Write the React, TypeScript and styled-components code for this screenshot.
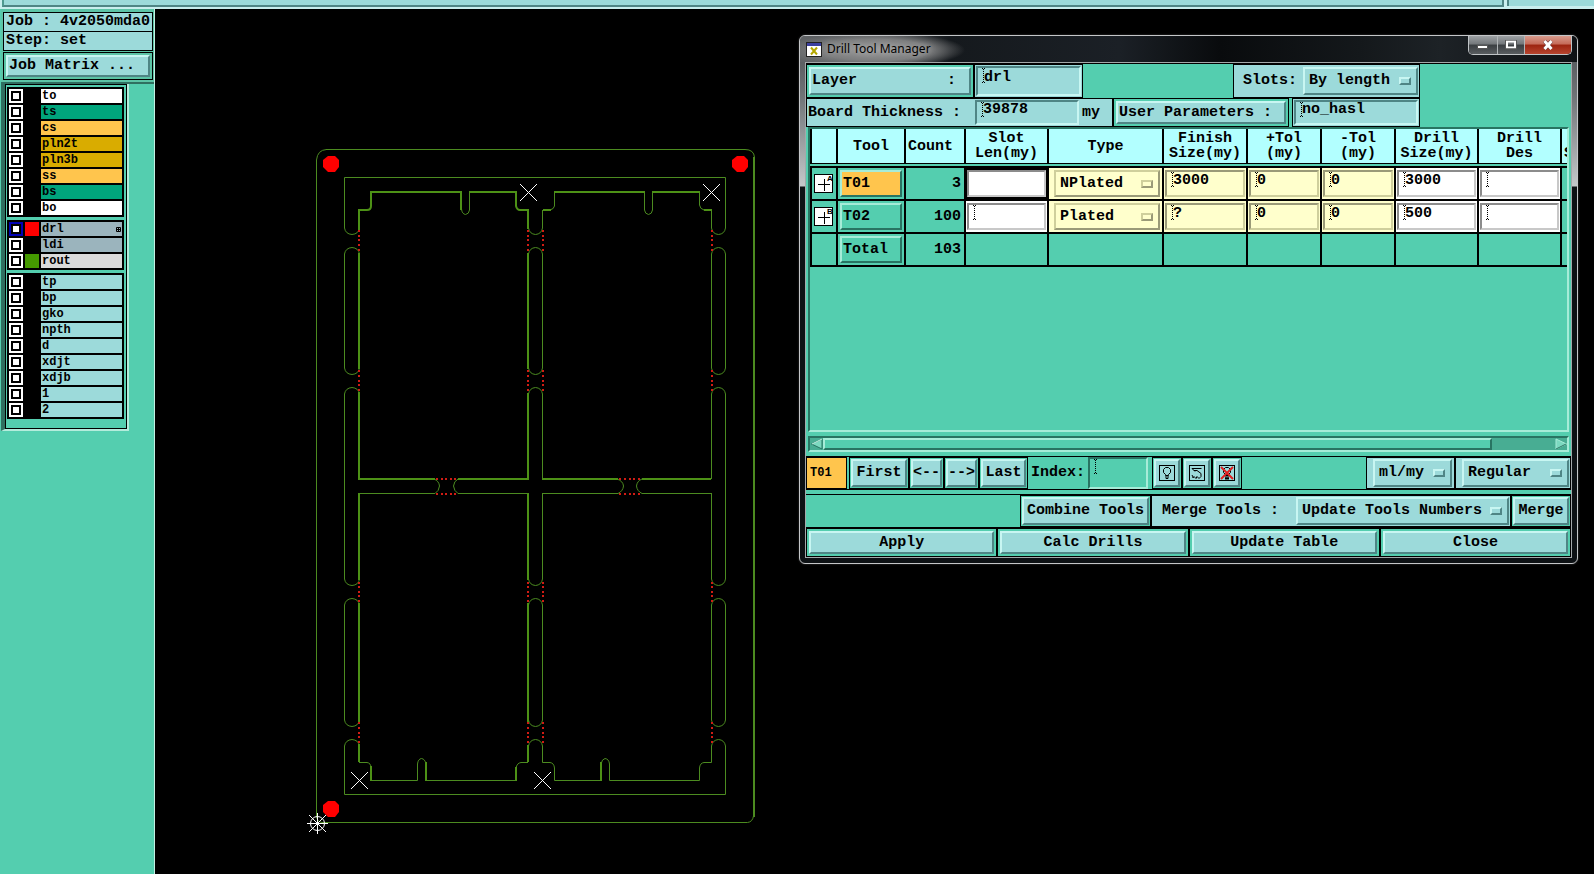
import React from "react";
import styled, { createGlobalStyle, css } from "styled-components";

const GREEN = "#54ceaf";
const CYAN = "#9cdada";
const MONO = '"Liberation Mono", "Courier New", monospace';

const GlobalStyle = createGlobalStyle`
  *, *::before, *::after { box-sizing: border-box; }
  body { margin: 0; background: #000; font: bold 15px/16px ${MONO}; color: #000; }
  button, input, select { margin: 0; font: inherit; color: inherit; border-radius: 0; outline: none; }
`;

type Tone = "cyan" | "green" | "orange" | "cream" | "white";

const tones: Record<Tone, { bg: string; light: string; dark: string }> = {
  cyan: { bg: CYAN, light: "#c8f6f2", dark: "#4f8585" },
  green: { bg: GREEN, light: "#a6ecd8", dark: "#287462" },
  orange: { bg: "#ffc54d", light: "#a6ecd8", dark: "#287462" },
  cream: { bg: "#ffffcc", light: "#cfcf9c", dark: "#9a9a78" },
  white: { bg: "#ffffff", light: "#c8c8c8", dark: "#8c8c8c" },
};

const raised = css<{ $tone?: Tone }>`
  border: 2px solid;
  border-color: ${({ $tone = "cyan" }) => {
    const t = tones[$tone];
    return `${t.light} ${t.dark} ${t.dark} ${t.light}`;
  }};
  background-color: ${({ $tone = "cyan" }) => tones[$tone].bg};
`;

/* ---------- page ---------- */

const Page = styled.div`
  display: flex;
  flex-direction: column;
  min-height: 100vh;
  background: #000;
`;

const TopBar = styled.header`
  display: flex;
  gap: 3px;
  height: 9px;
  padding-left: 2px;
  background: #c9eeee;
`;

const TopSegment = styled.div<{ $width?: number }>`
  flex: ${({ $width }) => ($width ? `0 0 ${$width}px` : "1")};
  height: ${({ $width }) => ($width ? 7 : 6)}px;
  background: ${CYAN};
  border-left: 2px solid ${({ $width }) => ($width ? "#4f9a90" : "#4f8585")};
  ${({ $width }) => $width && "border-right: 2px solid #4f8585; border-bottom: 2px solid #4f8585;"}
`;

const Workspace = styled.div`
  flex: 1;
  display: flex;
`;

/* ---------- sidebar ---------- */

const Sidebar = styled.aside`
  flex: 0 0 155px;
  padding-left: 1px;
  background: ${GREEN};
  border-right: 1px solid #c2f0e2;
`;

const JobPanel = styled.section`
  display: flex;
  flex-direction: column;
  gap: 1px;
  padding: 3px 1px 2px 2px;
  background: #5cc4a6;
  border-bottom: 2px solid #2f6f60;
`;

const JobLines = styled.div`
  display: flex;
  flex-direction: column;
  gap: 1px;
  padding: 1px;
  background: #000;
`;

const JobLine = styled.div`
  height: 18px;
  padding: 0 2px;
  line-height: 18px;
  background: ${CYAN};
  white-space: pre;
`;

const JobButtonBox = styled.div`
  padding: 2px;
  border: 1px solid #000;
`;

const LayerFrame = styled.section`
  width: 128px;
  border-left: 4px solid #2f6f60;
  border-right: 2px solid #b4ecdc;
  border-bottom: 2px solid #b4ecdc;
`;

const LayerPanel = styled.div`
  display: flex;
  flex-direction: column;
  gap: 3px;
  padding: 2px 2px 9px 1px;
  border: 1px solid #000;
`;

const LayerGroup = styled.ul`
  display: flex;
  flex-direction: column;
  gap: 2px;
  margin: 0;
  padding: 2px;
  list-style: none;
  background: #000;
`;

const LayerRow = styled.li`
  display: flex;
  gap: 2px;
  height: 14px;
`;

const LayerCheck = styled.input<{ $edge: string }>`
  appearance: none;
  flex: 0 0 14px;
  height: 14px;
  background: #fff;
  box-shadow: inset 0 0 0 2px ${({ $edge }) => $edge}, inset 0 0 0 4px #000;
`;

const Swatch = styled.span<{ $color: string }>`
  flex: 0 0 14px;
  background: ${({ $color }) => $color};
`;

const LayerName = styled.label<{ $color: string }>`
  flex: 1;
  display: flex;
  justify-content: space-between;
  align-items: center;
  padding: 0 1px;
  font-size: 12px;
  line-height: 14px;
  background: ${({ $color }) => $color};
`;

/* ---------- canvas and window ---------- */

const Canvas = styled.main`
  position: relative;
  flex: 1;
  min-width: 0;
`;

const Board = styled.svg`
  display: block;
`;

const Window = styled.section`
  position: absolute;
  left: 644px;
  top: 26px;
  width: 779px;
  padding: 0 5px 5px;
  border: 1px solid #c4c6c8;
  border-radius: 6px;
  background: linear-gradient(#4c4f52 0, #6f7376 60px, #c4c8ca 150px, #0d1114 151px);
  box-shadow: 0 0 2px #444;
`;

const TitleBar = styled.header`
  display: flex;
  justify-content: space-between;
  align-items: flex-start;
  height: 26px;
  margin: 0 -5px;
  padding: 0 5px 0 6px;
  border-radius: 5px 5px 0 0;
  background:
    radial-gradient(ellipse 90px 18px at 75px 14px, #9a9a9a 0, #7c7d7e 60%, transparent),
    linear-gradient(90deg, #606366 0, #45484b 90px, #15191d 150px, #1b2026 320px, #090b0d 420px, #14181b 560px, #1d2226 640px, #0e1114 100%);
`;

const Title = styled.h1`
  display: flex;
  align-items: center;
  gap: 5px;
  height: 26px;
  margin: 0;
  font: 12px/16px "Noto Sans", "Open Sans", sans-serif;
  text-shadow: 0 0 6px #bbb;
`;

const WindowButtons = styled.div`
  display: flex;
  height: 19px;
  border: 1px solid #c0c4c6;
  border-top: 0;
  border-radius: 0 0 5px 5px;
  overflow: hidden;
`;

const WindowButton = styled.button<{ $width: number; $close?: boolean }>`
  display: flex;
  align-items: center;
  justify-content: center;
  width: ${({ $width }) => $width}px;
  padding: 0;
  border: 0;
  border-left: ${({ $close }) => ($close === undefined ? "0" : "1px solid #b0b4b6")};
  background: ${({ $close }) =>
    $close
      ? "linear-gradient(#d89a8c 0, #c56a58 45%, #9c2410 50%, #b8452f 100%)"
      : "linear-gradient(#9da1a4 0, #73777a 45%, #3a3e41 50%, #5a5e61 100%)"};
`;

const Body = styled.div`
  display: flex;
  flex-direction: column;
  border: 1px solid #a4a8aa;
  background: ${GREEN};
`;

const Row = styled.div<{ $height: number; $top?: number }>`
  display: flex;
  height: ${({ $height }) => $height}px;
  margin-top: ${({ $top = 0 }) => $top}px;
`;

const FirstRow = styled(Row)`
  border-top: 1px solid #000;
`;

const LinedRow = styled(Row)`
  border: 1px solid #000;
  border-width: 1px 0;
`;

const Cell = styled.div<{ $width?: number; $fill?: string; $pad?: string }>`
  flex: ${({ $width }) => ($width ? `0 0 ${$width}px` : "1")};
  display: flex;
  align-items: center;
  min-width: 0;
  padding: ${({ $pad = "2px" }) => $pad};
  border: 1px solid #000;
  background: ${({ $fill = "transparent" }) => $fill};
  white-space: pre;
`;

const Spacer = styled.div<{ $width?: number }>`
  flex: ${({ $width }) => ($width ? `0 0 ${$width}px` : "1")};
`;

const Button = styled.button<{ $tone?: Tone; $align?: "left" | "center" }>`
  ${raised}
  display: flex;
  flex: 1;
  align-items: center;
  justify-content: ${({ $align = "center" }) => ($align === "left" ? "flex-start" : "center")};
  width: 100%;
  height: 100%;
  min-height: 22px;
  padding: 0 1px;
  white-space: pre;
`;

const Entry = styled.input<{ $tone?: Tone; $blank?: boolean }>`
  display: block;
  flex: 1;
  width: 100%;
  height: 100%;
  min-width: 0;
  padding: 0 2px 7px 6px;
  border: 2px solid;
  border-color: ${({ $tone = "cyan" }) => {
    const t = tones[$tone];
    return `${t.dark} ${t.light} ${t.light} ${t.dark}`;
  }};
  background-color: ${({ $tone = "cyan" }) => tones[$tone].bg};
  ${({ $blank }) =>
    !$blank &&
    css`
      background-image:
        repeating-linear-gradient(#000 0 1px, transparent 1px 2px),
        linear-gradient(90deg, #000 1px, transparent 1px 2px, #000 2px),
        linear-gradient(90deg, #000 1px, transparent 1px 2px, #000 2px);
      background-size: 1px 14px, 3px 1px, 3px 1px;
      background-position: 5px 1px, 4px 0, 4px 14px;
      background-repeat: no-repeat;
    `}
`;

const Picker = styled.span<{ $tone?: Tone; $width?: number }>`
  position: relative;
  display: block;
  flex: ${({ $width }) => ($width ? `0 0 ${$width}px` : "1")};
  height: 100%;

  &::after {
    content: "";
    position: absolute;
    right: 7px;
    top: calc(50% - 4px);
    width: 12px;
    height: 8px;
    pointer-events: none;
    ${raised}
  }

  select {
    ${raised}
    appearance: none;
    display: block;
    width: 100%;
    height: 100%;
    padding: 0 0 0 4px;
  }
`;

const CreamPicker = styled(Picker)`
  select { border-color: #cfcf9c #9a9a78 #9a9a78 #cfcf9c; background-color: #ffffcc; }
`;

const BoardEntry = styled(Entry)`
  flex: 0 0 104px;
`;

const IndexEntry = styled(Entry)`
  flex: 0 0 60px;
`;

/* ---------- tool table ---------- */

const TablePanel = styled.div`
  height: 305px;
  margin: 0 2px;
  overflow: hidden;
  border: 2px solid;
  border-color: #287462 #a6ecd8 #a6ecd8 #287462;
`;

const ToolTable = styled.table`
  width: 758px;
  table-layout: fixed;
  border-collapse: separate;
  border-spacing: 0;
`;

const HeadCell = styled.th`
  height: 35px;
  padding: 0;
  overflow: hidden;
  border-left: 2px solid #000;
  border-bottom: 1px solid #000;
  background: #b2ffff;
  line-height: 15px;
  white-space: pre;

  &:nth-child(3) { padding-left: 2px; text-align: left; }
  &:last-child { padding-left: 2px; text-align: left; }
`;

const GapCell = styled.td`
  height: 2px;
  padding: 0;
`;

const DataCell = styled.td<{ $tone?: Tone | "black"; $right?: boolean; $pad?: string }>`
  height: 33px;
  padding: ${({ $pad = "1px" }) => $pad};
  overflow: hidden;
  border-left: 2px solid #000;
  border-top: 2px solid #000;
  background: ${({ $tone = "green" }) => ($tone === "black" ? "#000" : tones[$tone].bg)};
  text-align: ${({ $right }) => ($right ? "right" : "left")};

  tbody tr:last-child > & { height: 35px; border-bottom: 2px solid #000; }
`;

const CellBox = styled.div`
  display: flex;
  height: 27px;
`;

const ScrollBar = styled.div`
  display: flex;
  height: 16px;
  margin: 4px 2px 0;
  border: 2px solid;
  border-color: #287462 #a6ecd8 #a6ecd8 #287462;
  background: #48ad93;
`;

const ScrollArrow = styled.button`
  flex: 0 0 13px;
  height: 12px;
  padding: 0;
  border: 0;
  background: none;
  line-height: 0;
`;

const Thumb = styled.div`
  flex: 0 0 669px;
  border: 2px solid;
  border-color: #a6ecd8 #287462 #287462 #a6ecd8;
  background: ${GREEN};
`;

const CurrentTool = styled.output`
  flex: 0 0 41px;
  display: flex;
  align-items: center;
  padding-left: 3px;
  border: 1px solid #000;
  background: #ffc54d;
  font-size: 12px;
`;

const IndexLabel = styled.label`
  display: flex;
  align-items: center;
  flex: 0 0 57px;
`;

/* ---------- drawings ---------- */

const LINE = "#4c8b20";

const columns = [359, 528, 543, 712];
const tabRows = [
  [231, 236, 240, 245, 250],
  [371, 376, 381, 385, 390],
  [583, 587, 592, 596, 601],
  [723, 728, 733, 737, 742],
];
const crossTabs = [437, 442, 446, 451, 455, 620, 625, 630, 634, 639];

/* Vertical rail between two tab gaps: left edge, right edge. */
const rails = [
  { l: 344.5, r: 359.5 },
  { l: 528.5, r: 542.5 },
  { l: 711.5, r: 725.5 },
];

const octagon = (x: number, y: number) =>
  `M${x - 3} ${y - 8}h7l4 4v7l-4 5h-7l-5 -5v-7z`;

function BoardDrawing() {
  return (
    <Board width="620" height="865" viewBox="155 9 620 865" fill="none" role="img" aria-label="Panel outline">
      <g stroke={LINE} strokeWidth="1">
        <path d="M326 149.500H745q9 0 9.500 8M753.500 816q-1 6-6 6.500H322q-5-1-5.500-6V160q1-10 10-10.500" />
        <path d="M344.500 228V177.500H725.500V228" />
        <path d="M344.500 746V794.500H725.500V746" />
        {rails.map(({ l, r }) => {
          const m = (l + r) / 2;
          return (
            <g key={l}>
              <path d={`M${l} 228Q${l + 1} 234 ${m} 234.500Q${r - 1} 234 ${r} 228`} />
              <path d={`M${l} 254Q${l + 1} 248 ${m} 247.500Q${r - 1} 248 ${r} 254V368Q${r - 1} 374 ${m} 374.500Q${l + 1} 374 ${l} 368Z`} />
              <path d={`M${l} 394Q${l + 1} 388 ${m} 387.500Q${r - 1} 388 ${r} 394`} />
              <path d={`M${l} 579Q${l + 1} 585 ${m} 585.500Q${r - 1} 585 ${r} 579`} />
              <path d={`M${l} 605Q${l + 1} 599 ${m} 598.500Q${r - 1} 599 ${r} 605V720Q${r - 1} 726 ${m} 726.500Q${l + 1} 726 ${l} 720Z`} />
              <path d={`M${l} 746Q${l + 1} 740 ${m} 739.500Q${r - 1} 740 ${r} 746`} />
            </g>
          );
        })}
        <path d="M344.500 394V579M725.500 394V579" />
        <path d="M542.500 228V210M542.500 394V479M542.500 493.500V579M542.500 746V762.500" />
        <path d="M711.500 228V210M711.500 394V479M711.500 493.500V579M711.500 746V762.500" />
        <path d="M358 493.500H435Q439 491 439.500 486Q439 481 434 479M458 479Q454 481 453.500 486Q454 491 458 493.500H529" />
        <path d="M542 493.500H618Q623 491 623.500 486Q623 481 617 479M642 479Q637 481 636.500 486Q637 491 642 493.500H712" />
        <path d="M461.500 209Q462 214 465.500 214.500Q469 214 469.500 210V192" />
        <path d="M554.500 192V206Q554 209 550 210M644.500 192V210Q645 214 648.500 214.500Q652 214 652.500 210V192M699.500 192V205Q700 209 704 210" />
        <path d="M359 762.500H367Q371 763 371 768M371 780.500H417.500V764Q418 759 421.500 758.500Q425 759 426 764M426 780.500H516M516 768Q517 763 521 762.500H528" />
        <path d="M542.500 762.500H550Q554 763 554.500 768V780.500H601M601 764Q602 759 605 758.500Q609 759 609.500 764V780.500H699.500V768Q700 763 704 762.500H711.500" />
      </g>
      <g stroke="#4d9116" strokeWidth="2">
        <path d="M754 157V817" stroke={LINE} />
        <path d="M359 230V210H367Q371 210 371 206V192H461V210M469 192H516V206Q517 210 520 210H528V229" />
        <path d="M543 210H551M554 192H645M652 192H700M704 210H712" />
        <path d="M359 253V369M359 392V479H435M458 479H528V393M528 253V369" />
        <path d="M542 479H618M642 479H711" />
        <path d="M359 493V580M359 603V722M359 744V762M371 766V781M426 762V781M516 767V781M528 762V745M528 493V580M528 603V722" />
        <path d="M601 762V781" />
      </g>
      <g fill="#d01c14">
        {columns.map((x) =>
          tabRows.flat().map((y) => <rect key={`${x}-${y}`} x={x - 1} y={y - 1} width="2" height="2" />)
        )}
        {crossTabs.map((x) => (
          <g key={x}>
            <rect x={x - 1} y="478" width="2" height="2" />
            <rect x={x - 1} y="493" width="2" height="2" />
          </g>
        ))}
      </g>
      <g fill="#f00">
        <path d={octagon(331, 164)} />
        <path d={octagon(740, 164)} />
        <path d={octagon(331, 809)} />
      </g>
      <g stroke="#fff" strokeWidth="1">
        {[[528.5, 192.5], [711.5, 192.5], [359.5, 780.5], [542.5, 780.5]].map(([x, y]) => (
          <path key={`${x}${y}`} d={`M${x - 8.5} ${y - 8.5}l17 17m0-17l-17 17`} />
        ))}
        <circle cx="317.500" cy="823.500" r="7" />
        <path d="M307 823.500h21M317.500 813v21M309 815l17 17M326 815l-17 17" />
      </g>
    </Board>
  );
}

const Mark = styled.svg`
  display: block;
`;

function ToolMark({ letter }: { letter: string }) {
  return (
    <Mark width="20" height="20" viewBox="0 0 20 20" role="img" aria-label={`Symbol ${letter}`}>
      <rect x="0.500" y="0.500" width="18" height="18" fill="#fff" stroke="#000" />
      <path d="M4 10.500h12M10.500 5v12" stroke="#000" strokeWidth="1" />
      <text x="13" y="7" fontSize="8" fontFamily="Liberation Sans" fontWeight="700">{letter}</text>
    </Mark>
  );
}

function BulbIcon({ mode }: { mode: "bulb" | "curve" | "crossed" }) {
  return (
    <svg width="16" height="16" viewBox="0 0 16 16" fill="none" stroke="#000">
      <rect x="0.500" y="0.500" width="15" height="15" />
      {mode === "curve" ? (
        <path d="M3 3.500h9.500M5 5.500h3l4 3v3l-2 2-2-2-1 2-2-2-1.500 1.500M3 3.500l3 3M3 10l1.500 3" />
      ) : (
        <path d="M6.500 10.500v-1l-2-2v-3l2-2h3l2 2v3l-2 2v1zM7 11v2.500h2v-2.500" />
      )}
      {mode === "crossed" && (
        <>
          <path d="M6 10h4M6 13.500h4" strokeWidth="2" />
          <path d="M2 2l12 12M14 2L2 14" stroke="#e02020" strokeWidth="2" />
        </>
      )}
    </svg>
  );
}

/* ---------- data ---------- */

const layerGroups: { name: string; color: string; swatch?: string; edge?: string; grid?: boolean }[][] = [
  [
    { name: "to", color: "#ffffff" },
    { name: "ts", color: "#00a57c" },
    { name: "cs", color: "#ffc54d" },
    { name: "pln2t", color: "#d9ac00" },
    { name: "pln3b", color: "#d9ac00" },
    { name: "ss", color: "#ffc54d" },
    { name: "bs", color: "#00a57c" },
    { name: "bo", color: "#ffffff" },
  ],
  [
    { name: "drl", color: "#9bb4bd", swatch: "#ff0000", edge: "#0000b4", grid: true },
    { name: "ldi", color: "#9bb4bd" },
    { name: "rout", color: "#dadada", swatch: "#459a00" },
  ],
  ["tp", "bp", "gko", "npth", "d", "xdjt", "xdjb", "1", "2"].map((name) => ({ name, color: CYAN })),
];

const headings = ["", "Tool", "Count", "Slot\nLen(my)", "Type", "Finish\nSize(my)", "+Tol\n(my)", "-Tol\n(my)", "Drill\nSize(my)", "Drill\nDes", " \nS"];
const columnWidths = [26, 68, 60, 83, 115, 84, 74, 74, 83, 83, 8];

const tools = [
  { mark: "A", id: "T01", count: 3, type: "NPlated", finish: "3000", drill: "3000", current: true },
  { mark: "B", id: "T02", count: 100, type: "Plated", finish: "?", drill: "500", current: false },
];

const iconActions = [
  { mode: "bulb", label: "Highlight" },
  { mode: "curve", label: "Redraw" },
  { mode: "crossed", label: "Clear highlight" },
] as const;

function Select({ label, value, tone, width, options = [] }: { label: string; value: string; tone?: Tone; width?: number; options?: string[] }) {
  return (
    <Picker $tone={tone} $width={width}>
      <select aria-label={label} defaultValue={value}>
        {[value, ...options].map((o) => (
          <option key={o}>{o}</option>
        ))}
      </select>
    </Picker>
  );
}

function DrillTable() {
  return (
    <TablePanel>
      <ToolTable>
        <colgroup>
          {columnWidths.map((w, i) => (
            <col key={i} width={w} />
          ))}
        </colgroup>
        <thead>
          <tr>
            {headings.map((h, i) => (
              <HeadCell key={i} scope="col">{h}</HeadCell>
            ))}
          </tr>
        </thead>
        <tbody>
          <tr><GapCell colSpan={11} /></tr>
          {tools.map((t) => (
            <tr key={t.id}>
              <DataCell $pad="0 0 0 2px"><ToolMark letter={t.mark} /></DataCell>
              <DataCell $pad="1px 2px">
                <CellBox><Button $tone={t.current ? "orange" : "green"} $align="left">{t.id}</Button></CellBox>
              </DataCell>
              <DataCell $right $pad="0 3px 0 0">{t.count}</DataCell>
              <DataCell $tone={t.current ? "black" : "white"}>
                <CellBox><Entry $tone="white" $blank={t.current} aria-label={`${t.id} slot length`} /></CellBox>
              </DataCell>
              <DataCell $tone="cream" $pad="1px 2px 1px 5px">
                <CellBox>
                  <CreamPicker $tone="cream">
                    <select aria-label={`${t.id} type`} defaultValue={t.type}>
                      <option>NPlated</option>
                      <option>Plated</option>
                    </select>
                  </CreamPicker>
                </CellBox>
              </DataCell>
              <DataCell $tone="cream">
                <CellBox><Entry $tone="cream" defaultValue={t.finish} aria-label={`${t.id} finish size`} /></CellBox>
              </DataCell>
              <DataCell $tone="cream">
                <CellBox><Entry $tone="cream" defaultValue="0" aria-label={`${t.id} plus tolerance`} /></CellBox>
              </DataCell>
              <DataCell $tone="cream">
                <CellBox><Entry $tone="cream" defaultValue="0" aria-label={`${t.id} minus tolerance`} /></CellBox>
              </DataCell>
              <DataCell $tone="white">
                <CellBox><Entry $tone="white" defaultValue={t.drill} aria-label={`${t.id} drill size`} /></CellBox>
              </DataCell>
              <DataCell $tone="white">
                <CellBox><Entry $tone="white" aria-label={`${t.id} drill designation`} /></CellBox>
              </DataCell>
              <DataCell />
            </tr>
          ))}
          <tr>
            <DataCell />
            <DataCell $pad="1px 2px">
              <CellBox><Button $tone="green" $align="left">Total</Button></CellBox>
            </DataCell>
            <DataCell $right $pad="0 3px 0 0">103</DataCell>
            {Array.from({ length: 8 }, (_, i) => (
              <DataCell key={i} />
            ))}
          </tr>
        </tbody>
      </ToolTable>
    </TablePanel>
  );
}

function DrillToolManager() {
  return (
    <Window aria-label="Drill Tool Manager">
      <TitleBar>
        <Title>
          <svg width="16" height="15" viewBox="0 0 16 15">
            <rect x="0.500" y="0.500" width="15" height="14" fill="#fff" stroke="#222" />
            <rect x="1" y="1" width="14" height="3" fill="#3b3fa0" />
            <path d="M5 5.500l6 7M11 5.500l-6 7" stroke="#b5a800" strokeWidth="2" />
          </svg>
          Drill Tool Manager
        </Title>
        <WindowButtons>
          <WindowButton $width={28} aria-label="Minimize">
            <svg width="12" height="10"><rect x="0.500" y="5.500" width="10" height="3" fill="#fff" stroke="#555" /></svg>
          </WindowButton>
          <WindowButton $width={27} $close={false} aria-label="Maximize">
            <svg width="12" height="10" fill="none"><rect x="2" y="1.500" width="8" height="6" stroke="#fff" strokeWidth="2" /><rect x="0.500" y="0" width="11" height="9" stroke="#555" /></svg>
          </WindowButton>
          <WindowButton $width={47} $close aria-label="Close window">
            <svg width="12" height="10"><path d="M2.500 1l7 8M9.500 1l-7 8" stroke="#633" strokeWidth="4" /><path d="M2.500 1l7 8M9.500 1l-7 8" stroke="#fff" strokeWidth="3" /></svg>
          </WindowButton>
        </WindowButtons>
      </TitleBar>
      <Body>
        <FirstRow $height={35}>
          <Cell $width={168}><Button $align="left">{"Layer          :"}</Button></Cell>
          <Cell $width={109} $fill={CYAN} $pad="1px"><Entry defaultValue="drl" aria-label="Layer" /></Cell>
          <Spacer $width={150} />
          <Cell $width={187} $fill={CYAN} $pad="2px 1px 2px 9px">
            <span>Slots:</span>
            <Spacer />
            <Select label="Slots" value="By length" width={115} options={["By count"]} />
          </Cell>
        </FirstRow>
        <Row $height={29}>
          <Cell $width={307} $fill={CYAN} $pad="1px 1px 1px 1px" as="label">
            {"Board Thickness :"}
            <Spacer $width={14} />
            <BoardEntry defaultValue="39878" />
            <Spacer $width={3} />
            my
          </Cell>
          <Cell $width={176}><Button $align="left">{"User Parameters :"}</Button></Cell>
          <Spacer $width={3} />
          <Cell $width={128} $fill={CYAN} $pad="1px"><Entry defaultValue="no_hasl" aria-label="User parameters" /></Cell>
        </Row>
        <DrillTable />
        <ScrollBar>
          <ScrollArrow aria-label="Scroll left">
            <svg width="12" height="12"><path d="M0.500 6L11 1v10z" fill="#7cd9c0" stroke="#287462" /><path d="M1 6L11 1" stroke="#c8f6e8" /></svg>
          </ScrollArrow>
          <Thumb />
          <Spacer />
          <ScrollArrow aria-label="Scroll right">
            <svg width="12" height="12"><path d="M1 1l10.500 5L1 11z" fill="#7cd9c0" stroke="#a6ecd8" /><path d="M1 11l10-5" stroke="#287462" /></svg>
          </ScrollArrow>
        </ScrollBar>
        <LinedRow $height={34} $top={4}>
          <CurrentTool>T01</CurrentTool>
          <Spacer $width={2} />
          <Cell $width={60} $pad="1px"><Button>First</Button></Cell>
          <Cell $width={35} $pad="1px"><Button aria-label="Previous">&lt;--</Button></Cell>
          <Cell $width={35} $pad="1px"><Button aria-label="Next">--&gt;</Button></Cell>
          <Cell $width={49} $pad="1px"><Button>Last</Button></Cell>
          <Spacer $width={3} />
          <IndexLabel htmlFor="tool-index">Index:</IndexLabel>
          <IndexEntry id="tool-index" $tone="green" />
          <Spacer $width={4} />
          {iconActions.map(({ mode, label }) => (
            <Cell key={mode} $width={30} $pad="1px"><Button aria-label={label}><BulbIcon mode={mode} /></Button></Cell>
          ))}
          <Spacer />
          <Cell $width={89} $fill={CYAN} $pad="1px 2px 1px 6px"><Select label="Units" value="ml/my" options={["inch"]} /></Cell>
          <Cell $width={116} $fill={CYAN} $pad="1px 1px 1px 6px"><Select label="Display" value="Regular" options={["Full"]} /></Cell>
        </LinedRow>
        <LinedRow $height={34} $top={4}>
          <Spacer />
          <Cell $width={131} $pad="1px"><Button>Combine Tools</Button></Cell>
          <Cell $width={360} $fill={CYAN} $pad="1px 1px 1px 10px">
            {"Merge Tools :"}
            <Spacer />
            <Select label="Merge tools" value="Update Tools Numbers" width={213} options={["Keep Tools Numbers"]} />
          </Cell>
          <Cell $width={60} $pad="1px"><Button>Merge</Button></Cell>
        </LinedRow>
        <Row $height={29}>
          {["Apply", "Calc Drills", "Update Table", "Close"].map((label) => (
            <Cell key={label}><Button>{label}</Button></Cell>
          ))}
        </Row>
      </Body>
    </Window>
  );
}

export default function App() {
  return (
    <>
      <GlobalStyle />
      <Page>
        <TopBar>
          <TopSegment $width={1502} />
          <TopSegment />
        </TopBar>
        <Workspace>
          <Sidebar>
            <JobPanel>
              <JobLines>
                <JobLine>Job : 4v2050mda0</JobLine>
                <JobLine>Step: set</JobLine>
              </JobLines>
              <JobButtonBox><Button $align="left">Job Matrix ...</Button></JobButtonBox>
            </JobPanel>
            <LayerFrame>
              <LayerPanel>
                {layerGroups.map((group, i) => (
                  <LayerGroup key={i}>
                    {group.map((layer) => (
                      <LayerRow key={layer.name}>
                        <LayerCheck type="checkbox" id={`layer-${layer.name}`} $edge={layer.edge ?? "#fff"} />
                        <Swatch $color={layer.swatch ?? "#000"} />
                        <LayerName htmlFor={`layer-${layer.name}`} $color={layer.color}>
                          {layer.name}
                          {layer.grid && (
                            <svg width="5" height="5" viewBox="0 0 5 5" fill="none" stroke="#000">
                              <path d="M0.500 0.500h4v4h-4zM2.500 0v5M0 2.500h5" />
                            </svg>
                          )}
                        </LayerName>
                      </LayerRow>
                    ))}
                  </LayerGroup>
                ))}
              </LayerPanel>
            </LayerFrame>
          </Sidebar>
          <Canvas>
            <BoardDrawing />
            <DrillToolManager />
          </Canvas>
        </Workspace>
      </Page>
    </>
  );
}
